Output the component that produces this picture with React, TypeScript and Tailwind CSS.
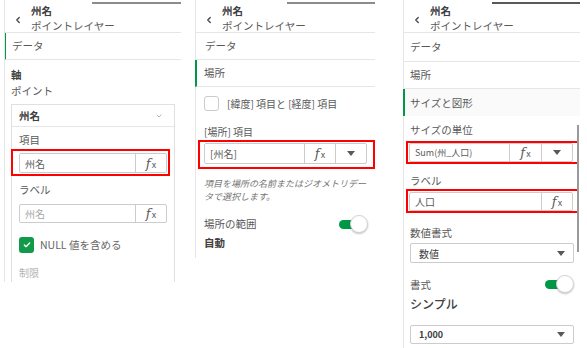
import { ChevronDown, ChevronLeft, Check } from 'lucide-react'

const font = { fontFamily: '"Noto Sans CJK JP", "Noto Sans", sans-serif' }

function Fx() {
  return (
    <span className="flex items-baseline text-[#595959]">
      <span className="italic text-[13px] leading-none" style={{ fontFamily: '"DejaVu Serif", serif' }}>f</span>
      <span className="text-[9px] leading-none ml-[1px]">x</span>
    </span>
  )
}

function Caret() {
  return (
    <svg width="8" height="5" viewBox="0 0 8 5">
      <polygon points="0,0 8,0 4,5" fill="#595959" />
    </svg>
  )
}

function Header({ barWidth, barColor }: { barWidth: string; barColor: string }) {
  return (
    <div className="h-[33px] border-b border-[#e6e6e6] overflow-hidden">
      <div className="flex justify-end pt-[2px]">
        <div className={`h-[2px] ${barWidth} ${barColor}`} />
      </div>
      <div className="flex items-center">
        <ChevronLeft size={10} strokeWidth={3} className="ml-[8px] mt-[2px] text-[#404040]" />
        <div className="ml-[8px]">
          <div className="h-[13px] text-[10.5px] leading-[13px] font-bold text-[#404040]">州名</div>
          <div className="h-[15px] mt-[1px] text-[10.5px] leading-[15px] text-[#595959]">ポイントレイヤー</div>
        </div>
      </div>
    </div>
  )
}

function Toggle() {
  return (
    <div className="relative w-[29px] h-[18px] flex items-center">
      <div className="w-[22px] h-[9px] rounded-full bg-[#009845]" />
      <div className="absolute right-0 top-0 w-[18px] h-[18px] rounded-full bg-white border border-[#d4d4d4] shadow-[0_1px_2px_rgba(0,0,0,0.25)]" />
    </div>
  )
}

export default function App() {
  return (
    <div className="w-[587px] h-[348px] bg-white flex items-start text-[#595959] text-[10.5px]" style={font}>
      {/* panel 1 */}
      <div className="ml-[4px] w-[177px] h-[282px] overflow-hidden border-l border-[#e6e6e6]">
        <Header barWidth="w-[89px]" barColor="bg-[#8c8c8c]" />
        <div className="-ml-px h-[27px] border-l-2 border-[#009845] border-b border-b-[#e6e6e6] flex items-center pl-[6px]">
          データ
        </div>
        <div className="px-[6px]">
          <div className="mt-[7px] leading-[16px] font-bold text-[#404040]">軸</div>
          <div className="leading-[16px]">ポイント</div>
          <div className="mt-[5px] border border-[#e0e0e0] h-[200px]">
            <div className="h-[22px] border-b border-[#e6e6e6] flex items-center justify-between pl-[7px] pr-[11px]">
              <span className="font-bold text-[#404040]">州名</span>
              <ChevronDown size={8} strokeWidth={2} className="text-[#8c8c8c]" />
            </div>
            <div className="px-[7px]">
              <div className="mt-[5px] leading-[16px]">項目</div>
              <div className="mt-[1px] -ml-[8px] -mr-[3px] border-2 border-[#ff0000] pl-[6px] pr-[1px] pt-[2px] pb-[1px]">
                <div className="h-[20px] border border-[#cccccc] rounded-[2px] flex items-stretch">
                  <div className="flex-1 flex items-center pl-[5px] text-[10px] text-[#595959]">州名</div>
                  <div className="w-[31px] border-l border-[#cccccc] flex items-center justify-center"><Fx /></div>
                </div>
              </div>
              <div className="mt-[6px] leading-[16px]">ラベル</div>
              <div className="mt-[6px] h-[19px] border border-[#cccccc] rounded-[2px] flex items-stretch">
                <div className="flex-1 flex items-center pl-[5px] text-[10px] text-[#a6a6a6]">州名</div>
                <div className="w-[31px] border-l border-[#cccccc] flex items-center justify-center"><Fx /></div>
              </div>
              <div className="mt-[14px] flex items-center gap-[6px]">
                <div className="w-[15px] h-[16px] rounded-[3px] bg-[#109a4a] flex items-center justify-center">
                  <Check size={8} strokeWidth={4} className="text-white" />
                </div>
                <span className="font-normal text-[#666666]">NULL 値を含める</span>
              </div>
              <div className="mt-[12px] text-[10px] leading-[16px] text-[#b3b3b3]">制限</div>
            </div>
          </div>
        </div>
      </div>

      {/* panel 2 */}
      <div className="ml-[14px] w-[180px] h-[258px] border-l border-[#e6e6e6]">
        <Header barWidth="w-[88px]" barColor="bg-[#8c8c8c]" />
        <div className="h-[27px] border-b border-[#e6e6e6] flex items-center pl-[9px]">データ</div>
        <div className="-ml-px h-[27px] border-l-2 border-[#009845] border-b border-b-[#e6e6e6] flex items-center pl-[7px]">
          場所
        </div>
        <div className="pl-[8px] pr-[7px]">
          <div className="mt-[9px] flex items-center gap-[8px]">
            <div className="w-[15px] h-[15px] rounded-[3px] border border-[#cccccc]" />
            <span className="text-[10px]">[緯度] 項目と [経度] 項目</span>
          </div>
          <div className="mt-[13px] text-[10px] leading-[16px]">[場所] 項目</div>
          <div className="-ml-[6px] -mr-[7px] border-2 border-[#ff0000] pl-[4px] pr-[6px] pt-[1px] pb-[3px]">
            <div className="h-[21px] border border-[#cccccc] rounded-[2px] flex items-stretch">
              <div className="flex-1 flex items-center pl-[5px] text-[10px]">[州名]</div>
              <div className="w-[31px] border-l border-[#cccccc] flex items-center justify-center"><Fx /></div>
              <div className="w-[31px] border-l border-[#cccccc] flex items-center justify-center"><Caret /></div>
            </div>
          </div>
          <div className="mt-[8px] text-[9px] leading-[13px] italic text-[#737373]">
            項目を場所の名前またはジオメトリデー
            <br />
            タで選択します。
          </div>
          <div className="mt-[12px] flex items-start justify-between">
            <div>
              <div className="leading-[16px] mt-[1px]">場所の範囲</div>
              <div className="leading-[16px] mt-[3px] font-bold text-[#404040]">自動</div>
            </div>
            <Toggle />
          </div>
        </div>
      </div>

      {/* panel 3 */}
      <div className="relative ml-[28px] w-[177px] h-[348px] border-l border-[#e6e6e6]">
        <Header barWidth="w-[88px]" barColor="bg-[#595959]" />
        <div className="h-[29px] border-b border-[#e6e6e6] flex items-center pl-[6px]">データ</div>
        <div className="h-[27px] border-b border-[#e6e6e6] flex items-center pl-[6px]">場所</div>
        <div className="-ml-px h-[27px] border-l-2 border-[#009845] bg-[#fafafa] flex items-center pl-[5px]">
          サイズと図形
        </div>
        <div className="absolute left-[173px] top-[125px] w-[2px] h-[127px] bg-[#9a9a9a]" />
        <div className="pl-[6px] pr-[6px]">
          <div className="mt-[6px] leading-[16px]">サイズの単位</div>
          <div className="mt-[3px] -ml-[4px] -mr-[5px] border-2 border-[#ff0000] pl-[1px] pr-[4px]">
            <div className="h-[19px] border border-[#cccccc] rounded-[2px] flex items-stretch">
              <div className="flex-1 flex items-center pl-[5px] text-[9px]">Sum(州_人口)</div>
              <div className="w-[32px] border-l border-[#cccccc] flex items-center justify-center"><Fx /></div>
              <div className="w-[31px] border-l border-[#cccccc] flex items-center justify-center"><Caret /></div>
            </div>
          </div>
          <div className="mt-[9px] leading-[16px]">ラベル</div>
          <div className="-ml-[4px] -mr-[5px] border-2 border-[#ff0000] pl-[1px] pr-[4px] pt-[1px]">
            <div className="h-[19px] border border-[#cccccc] rounded-[2px] flex items-stretch">
              <div className="flex-1 flex items-center pl-[5px] text-[10px]">人口</div>
              <div className="w-[31px] border-l border-[#cccccc] flex items-center justify-center"><Fx /></div>
            </div>
          </div>
          <div className="mt-[12px] leading-[16px]">数値書式</div>
          <div className="mt-[2px] h-[20px] border border-[#cccccc] rounded-[2px] flex items-center justify-between pl-[8px] pr-[8px]">
            <span className="text-[10px] text-[#404040]">数値</span>
            <Caret />
          </div>
          <div className="mt-[12px] flex items-start justify-between">
            <div>
              <div className="leading-[16px] mt-[2px]">書式</div>
              <div className="text-[12px] leading-[16px] mt-[3px] font-medium text-[#404040]">シンプル</div>
            </div>
            <Toggle />
          </div>
          <div className="mt-[13px] h-[19px] border border-[#cccccc] rounded-[2px] flex items-center justify-between pl-[8px] pr-[8px]">
            <span className="text-[9px] font-bold text-[#404040]">1,000</span>
            <Caret />
          </div>
        </div>
      </div>
    </div>
  )
}
